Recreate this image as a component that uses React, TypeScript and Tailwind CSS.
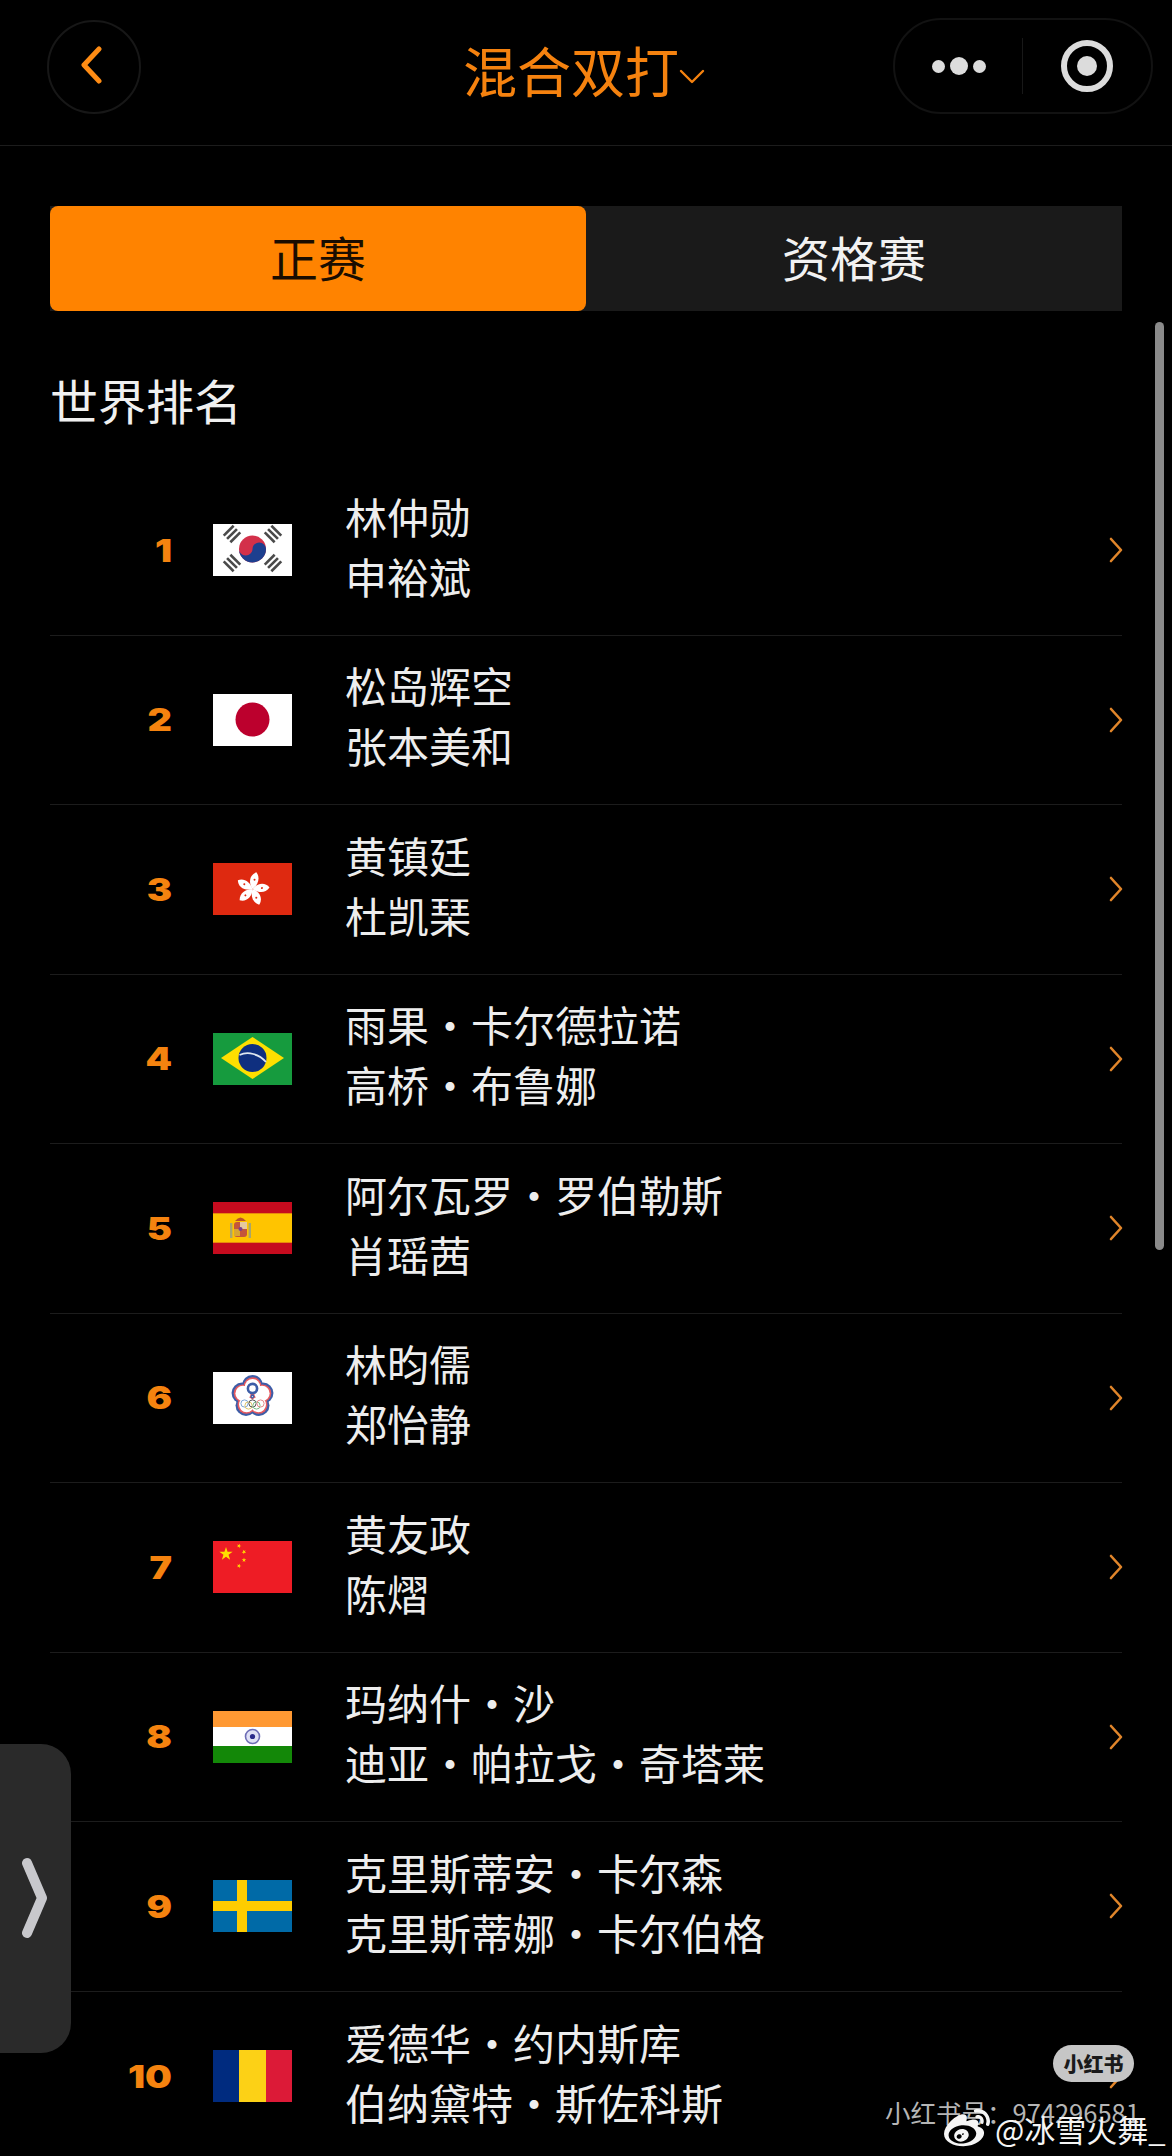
import React from "react";
import { FaWeibo } from "react-icons/fa";

const FONT = "font-['Noto_Sans_CJK_SC','Noto_Sans',sans-serif]";

function Star({ cx, cy, r, rot = 0, fill = "#ffde00" }: { cx: number; cy: number; r: number; rot?: number; fill?: string }) {
  const pts: string[] = [];
  for (let i = 0; i < 10; i++) {
    const a = ((-90 + rot + i * 36) * Math.PI) / 180;
    const rr = i % 2 ? r * 0.382 : r;
    pts.push(`${cx + rr * Math.cos(a)},${cy + rr * Math.sin(a)}`);
  }
  return <polygon points={pts.join(" ")} fill={fill} />;
}

function Trigram({ x, y, rot }: { x: number; y: number; rot: number }) {
  return (
    <g transform={`translate(${x} ${y}) rotate(${rot})`} fill="#4a4a4a">
      <rect x="-7" y="-6" width="14" height="2.6" />
      <rect x="-7" y="-1.3" width="14" height="2.6" />
      <rect x="-7" y="3.4" width="14" height="2.6" />
    </g>
  );
}

const FLAGS: Record<string, React.ReactNode> = {
  kr: (
    <>
      <rect width="79" height="52" fill="#fff" />
      <circle cx="39.5" cy="25" r="13.5" fill="#d3304a" />
      <path d="M26 25 a13.5 13.5 0 0 0 27 0 c0 -3.5 -3 -6.5 -6.7 -6.5 c-3.8 0 -6.8 3 -6.8 6.5 s-3 6.5 -6.8 6.5 s-6.7 -3 -6.7 -6.5z" fill="#1d3f8f" />
      <Trigram x={19} y={10} rot={-45} />
      <Trigram x={60} y={10} rot={45} />
      <Trigram x={19} y={39} rot={45} />
      <Trigram x={60} y={39} rot={-45} />
    </>
  ),
  jp: (
    <>
      <rect width="79" height="52" fill="#fff" />
      <circle cx="39.5" cy="25.5" r="17" fill="#bc002d" />
    </>
  ),
  hk: (
    <>
      <rect width="79" height="52" fill="#de2910" />
      {[0, 72, 144, 216, 288].map((r) => (
        <g key={r} transform={`rotate(${r + 8} 39.5 26)`}>
          <path d="M39.5 26 C34 20 35 12 41 9 C46 14 44.5 21 39.5 26z" fill="#fff" />
          <circle cx="40.2" cy="16.5" r="1" fill="#de2910" />
        </g>
      ))}
    </>
  ),
  br: (
    <>
      <rect width="79" height="52" fill="#169b3e" />
      <polygon points="8,25 39.5,4 71,25 39.5,46" fill="#fedf00" />
      <circle cx="39.5" cy="25" r="14" fill="#0f2f7f" />
      <path d="M26.5 22 C35 18 46 21 53 29" fill="none" stroke="#dfe7f0" strokeWidth="1.8" />
    </>
  ),
  es: (
    <>
      <rect width="79" height="52" fill="#c60b1e" />
      <rect y="11" width="79" height="30" fill="#e8890c" />
      <rect y="12" width="79" height="28" fill="#ffc400" />
      <rect x="21" y="20" width="13" height="15" rx="3" fill="#c4563a" />
      <rect x="27" y="20" width="7" height="7" fill="#e6c9a0" />
      <rect x="21" y="27" width="6" height="7" fill="#d9a531" />
      <circle cx="27.5" cy="27" r="2" fill="#7a3f8f" />
      <rect x="17" y="21" width="2.4" height="15" fill="#a9a56c" />
      <rect x="35.6" y="21" width="2.4" height="15" fill="#a9a56c" />
      <path d="M22 19 Q27.5 12 33 19z" fill="#b9502c" />
    </>
  ),
  tpe: (
    <>
      <rect width="79" height="52" fill="#fff" />
      <g transform="translate(39.5 24.5)">
        {[0, 72, 144, 216, 288].map((r) => (
          <circle key={r} cx={11 * Math.sin((r * Math.PI) / 180)} cy={-11 * Math.cos((r * Math.PI) / 180)} r="10.5" fill="#3d5da7" />
        ))}
        {[0, 72, 144, 216, 288].map((r) => (
          <circle key={`b${r}`} cx={10.5 * Math.sin((r * Math.PI) / 180)} cy={-10.5 * Math.cos((r * Math.PI) / 180)} r="8.8" fill="#e65a5f" />
        ))}
        {[0, 72, 144, 216, 288].map((r) => (
          <circle key={`c${r}`} cx={10 * Math.sin((r * Math.PI) / 180)} cy={-10 * Math.cos((r * Math.PI) / 180)} r="7.6" fill="#fff" />
        ))}
        <circle cy="-8" r="4.6" fill="none" stroke="#3d5da7" strokeWidth="2.6" />
        <g fill="none" strokeWidth="1">
          <circle cx="-8" cy="7" r="3.6" stroke="#7ea6d8" />
          <circle cx="-4" cy="9" r="3.6" stroke="#e0c66a" />
          <circle cx="0" cy="7" r="3.6" stroke="#555" />
          <circle cx="4" cy="9" r="3.6" stroke="#7cbf85" />
          <circle cx="8" cy="7" r="3.6" stroke="#e58a8a" />
        </g>
      </g>
    </>
  ),
  cn: (
    <>
      <rect width="79" height="52" fill="#ee1c25" />
      <Star cx={13} cy={13} r={7} />
      <Star cx={26} cy={5} r={2.4} rot={20} />
      <Star cx={31} cy={11} r={2.4} rot={45} />
      <Star cx={31} cy={19} r={2.4} rot={0} />
      <Star cx={26} cy={25} r={2.4} rot={20} />
    </>
  ),
  in: (
    <>
      <rect width="79" height="52" fill="#fff" />
      <rect width="79" height="16" fill="#ff9933" />
      <rect y="35" width="79" height="17" fill="#138808" />
      <circle cx="39.5" cy="25.5" r="7" fill="#dfe0f5" stroke="#6d6db5" strokeWidth="1.6" />
      <circle cx="39.5" cy="25.5" r="2.6" fill="#2a2a8a" />
    </>
  ),
  se: (
    <>
      <rect width="79" height="52" fill="#006aa7" />
      <rect x="24" width="10" height="52" fill="#fecc00" />
      <rect y="21" width="79" height="10" fill="#fecc00" />
    </>
  ),
  ro: (
    <>
      <rect width="26.5" height="52" fill="#002b7f" />
      <rect x="26" width="27" height="52" fill="#fcd116" />
      <rect x="53" width="26" height="52" fill="#dc1a37" />
    </>
  ),
};

const ROWS = [
  ["1", "kr", "林仲勋", "申裕斌"],
  ["2", "jp", "松岛辉空", "张本美和"],
  ["3", "hk", "黄镇廷", "杜凯琹"],
  ["4", "br", "雨果·卡尔德拉诺", "高桥·布鲁娜"],
  ["5", "es", "阿尔瓦罗·罗伯勒斯", "肖瑶茜"],
  ["6", "tpe", "林昀儒", "郑怡静"],
  ["7", "cn", "黄友政", "陈熠"],
  ["8", "in", "玛纳什·沙", "迪亚·帕拉戈·奇塔莱"],
  ["9", "se", "克里斯蒂安·卡尔森", "克里斯蒂娜·卡尔伯格"],
  ["10", "ro", "爱德华·约内斯库", "伯纳黛特·斯佐科斯"],
];

function Row({ rank, flag, a, b, last }: { rank: string; flag: string; a: string; b: string; last: boolean }) {
  return (
    <div className={`flex h-[169.5px] items-center ${last ? "" : "border-b border-[#1c1c1c]"}`}>
      <div className="w-[122px] origin-right [transform:scaleX(1.22)] text-right font-['Inter',sans-serif] text-[31px] leading-none font-black text-[#f5830f]">
        {rank}
      </div>
      <svg width="79" height="52" viewBox="0 0 79 52" className="ml-[41px] shrink-0">
        {FLAGS[flag]}
      </svg>
      <div className="mt-[-9px] ml-[53px] flex-1 text-[42px] leading-[60px] text-[#ededed]">
        <div>{a}</div>
        <div>{b}</div>
      </div>
      <svg width="14" height="26" viewBox="0 0 14 26" className="mr-[-1px] shrink-0" fill="none" stroke="#e0852a" strokeWidth="2.6" strokeLinecap="round" strokeLinejoin="round">
        <path d="M2 2 L12 13 L2 24" />
      </svg>
    </div>
  );
}

export default function App() {
  return (
    <div className={`relative h-[2156px] w-[1172px] overflow-hidden bg-black ${FONT}`}>
      <header className="relative flex h-[146px] items-center justify-between border-b border-[#1c1c1c] pr-[19px] pl-[47px]">
        <div className="mb-[12px] flex h-[94px] w-[94px] items-center justify-center rounded-full border-2 border-[#171717]">
          <svg width="24" height="38" viewBox="0 0 24 38" className="mt-[-4px] mr-[6px]" fill="none" stroke="#ff8c14" strokeWidth="5" strokeLinecap="round" strokeLinejoin="round">
            <path d="M20 3 L5 19 L20 35" />
          </svg>
        </div>
        <div className="absolute top-[30px] left-[463px] flex items-end text-[54px] leading-[80px] text-[#f5820f]">
          混合双打
          <svg width="26" height="16" viewBox="0 0 26 16" className="mb-[25px]" fill="none" stroke="#f5820f" strokeWidth="2.4" strokeLinecap="round" strokeLinejoin="round">
            <path d="M2 2 L13 13 L24 2" />
          </svg>
        </div>
        <div className="mb-[13px] flex h-[96px] w-[260px] items-center rounded-[48px] border-2 border-[#121212]">
          <div className="flex w-[127px] items-center justify-center gap-[5px]">
            <span className="h-[13px] w-[13px] rounded-full bg-[#dcdcdc]" />
            <span className="h-[18px] w-[18px] rounded-full bg-[#dcdcdc]" />
            <span className="h-[13px] w-[13px] rounded-full bg-[#dcdcdc]" />
          </div>
          <div className="h-[56px] w-px bg-[#181818]" />
          <div className="flex flex-1 items-center justify-center">
            <div className="flex h-[52px] w-[52px] items-center justify-center rounded-full border-[6px] border-[#dcdcdc]">
              <span className="h-[20px] w-[20px] rounded-full bg-[#dcdcdc]" />
            </div>
          </div>
        </div>
      </header>

      <main className="px-[50px]">
        <div className="mt-[60px] flex h-[105px] bg-[#1a1a1a]">
          <div className="flex w-[536px] items-center justify-center rounded-[8px] bg-[#ff8300] pb-[5px] text-[48px] text-[#1a0d00]">正赛</div>
          <div className="flex flex-1 items-center justify-center pb-[5px] text-[48px] text-[#f2f2f2]">资格赛</div>
        </div>
        <h2 className="mt-[48px] text-[48px] leading-[80px] font-normal text-[#f0f0f0]">世界排名</h2>
        <div className="mt-[27px]">
          {ROWS.map((r, i) => (
            <Row key={r[0]} rank={r[0]} flag={r[1]} a={r[2]} b={r[3]} last={i === 9} />
          ))}
        </div>
      </main>

      <div className="absolute top-[322px] right-[8px] h-[928px] w-[9px] rounded-full bg-[#8a8a8a]" />

      <div className="absolute top-[1744px] left-0 flex h-[309px] w-[71px] items-center rounded-r-[30px] bg-[#2a2a2a]">
        <svg width="30" height="84" viewBox="0 0 30 84" className="ml-[20px]" fill="none" stroke="#c8c8cc" strokeWidth="10" strokeLinecap="round" strokeLinejoin="round">
          <path d="M7 6 L22 41 L7 76" />
        </svg>
      </div>

      <div className="absolute top-[2045px] left-[1053px] flex h-[37px] w-[81px] items-center justify-center rounded-full bg-[#c6c6c6] text-[20px] font-black text-[#1a1a1a]">
        小红书
      </div>
      <div className="absolute top-[2095px] left-[885px] text-[25.5px] leading-[34px] whitespace-nowrap text-[#b5b5b5]">
        小红书号：974296581
      </div>
      <div className="absolute top-[2106px] left-[944px] flex items-center text-[#f5f5f5]">
        <FaWeibo size={46} />
        <span className="ml-[5px] text-[31px] leading-[42px] whitespace-nowrap">@冰雪火舞_</span>
      </div>
    </div>
  );
}
